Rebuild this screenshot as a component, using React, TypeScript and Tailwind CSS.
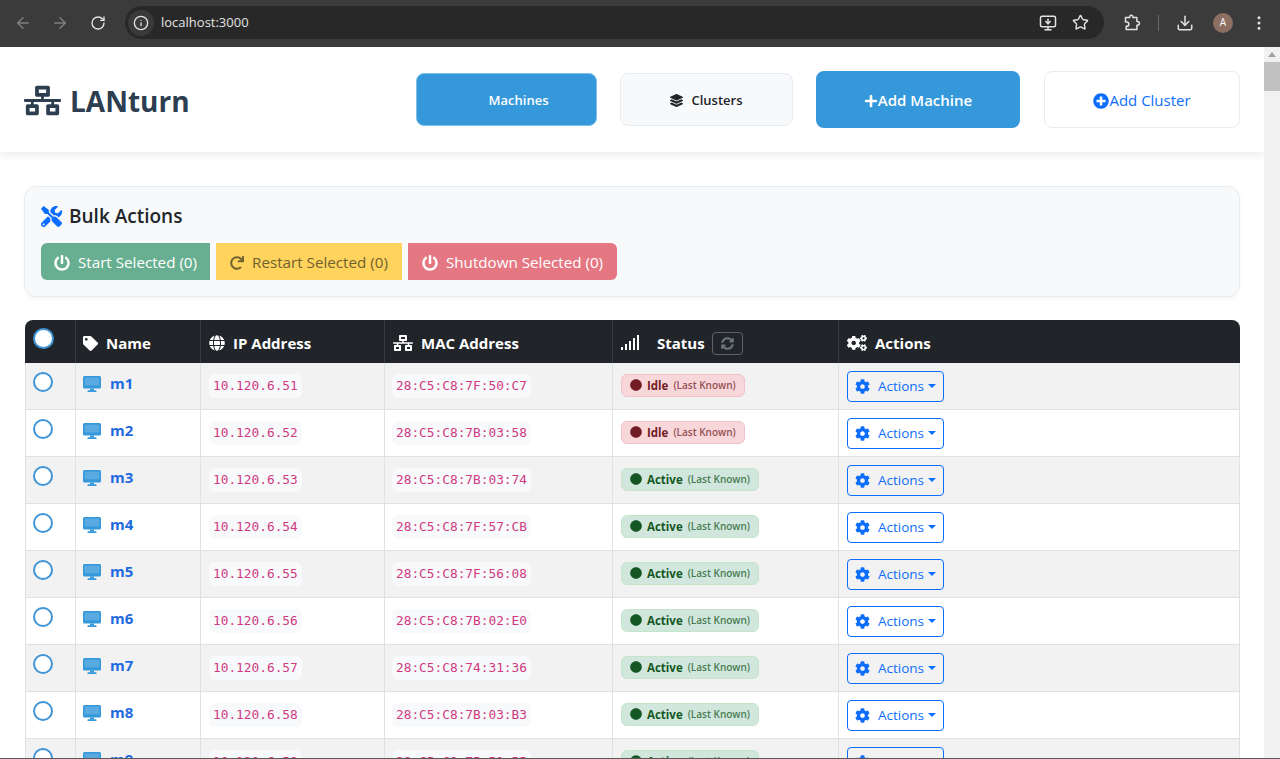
import { ArrowLeft, ArrowRight, RotateCw, Info, Star, Download, MoreVertical, MonitorDown } from "lucide-react";
import { FaNetworkWired, FaLayerGroup, FaPlus, FaPlusCircle, FaTools, FaPowerOff, FaRedo, FaTag, FaGlobe, FaSyncAlt, FaCogs, FaCog, FaCircle } from "react-icons/fa";

type Machine = { name: string; ip: string; mac: string; status: "Idle" | "Active" };

const machines: Machine[] = [
  { name: "m1", ip: "10.120.6.51", mac: "28:C5:C8:7F:50:C7", status: "Idle" },
  { name: "m2", ip: "10.120.6.52", mac: "28:C5:C8:7B:03:58", status: "Idle" },
  { name: "m3", ip: "10.120.6.53", mac: "28:C5:C8:7B:03:74", status: "Active" },
  { name: "m4", ip: "10.120.6.54", mac: "28:C5:C8:7F:57:CB", status: "Active" },
  { name: "m5", ip: "10.120.6.55", mac: "28:C5:C8:7F:56:08", status: "Active" },
  { name: "m6", ip: "10.120.6.56", mac: "28:C5:C8:7B:02:E0", status: "Active" },
  { name: "m7", ip: "10.120.6.57", mac: "28:C5:C8:74:31:36", status: "Active" },
  { name: "m8", ip: "10.120.6.58", mac: "28:C5:C8:7B:03:B3", status: "Active" },
  { name: "m9", ip: "10.120.6.59", mac: "28:C5:C8:75:51:55", status: "Active" },
];

function ExtensionIcon() {
  return (
    <svg width="18" height="18" viewBox="0 0 18 18" fill="none" stroke="currentColor" strokeWidth="1.5" strokeLinejoin="round">
      <path d="M2.5 3.5h4.2v-.6a1.6 1.6 0 0 1 3.2 0v.6h4v3.9h.6a1.9 1.9 0 0 1 0 3.8h-.6v4.3H3.2v-3.2h.5a2.1 2.1 0 0 0 0-4.2h-1.2z" />
    </svg>
  );
}

function ScreenIcon() {
  return (
    <svg width="18" height="16" viewBox="0 0 18 16" className="text-[#3498db]" fill="currentColor">
      <path d="M1.5 0h15A1.5 1.5 0 0 1 18 1.5v9.5a1.5 1.5 0 0 1-1.5 1.5h-15A1.5 1.5 0 0 1 0 11V1.5A1.5 1.5 0 0 1 1.5 0z" />
      <rect x="7" y="12.5" width="4" height="2" />
      <rect x="4.5" y="14.3" width="9" height="1.7" rx="0.6" />
      <rect x="1.6" y="1.6" width="14.8" height="7.8" fill="#ffffff" fillOpacity="0.18" />
    </svg>
  );
}

function ChromeBar() {
  return (
    <div className="h-[47px] shrink-0 flex items-center pb-[2px] bg-[#3b3b3b] text-[#e3e3e3]">
      <div className="w-[125px] shrink-0 flex items-center pl-[14px] gap-[19px]">
        <ArrowLeft size={18} className="text-[#7f7f7f]" />
        <ArrowRight size={18} className="text-[#7f7f7f]" />
        <RotateCw size={16} className="ml-[2px]" />
      </div>
      <div className="w-[979px] h-[33px] rounded-full bg-[#282828] flex items-center">
        <span className="ml-[3px] w-[26px] h-[26px] rounded-full bg-[#3a3a3a] flex items-center justify-center">
          <Info size={16} />
        </span>
        <span className="ml-[7px] text-[13px]">localhost:3000</span>
        <MonitorDown size={18} className="ml-auto" />
        <Star size={17} className="ml-[15px] mr-[15px]" />
      </div>
      <span className="ml-[19px]"><ExtensionIcon /></span>
      <span className="ml-[17px] w-px h-[16px] bg-[#6a6a6a]" />
      <Download size={18} className="ml-[17px]" />
      <span className="ml-[19px] w-5 h-5 rounded-full bg-[#8d6e63] text-white text-[10px] flex items-center justify-center">A</span>
      <MoreVertical size={18} className="ml-[17px]" />
    </div>
  );
}

function Header() {
  return (
    <header className="relative h-[105px] shrink-0 bg-white shadow-[0_2px_10px_rgba(0,0,0,0.1)] flex items-center justify-between px-6">
      <div className="flex items-center gap-[9px] pt-[2px] text-[#2c3e50]">
        <FaNetworkWired size={37} />
        <h1 className="text-[28px] font-bold">LANturn</h1>
      </div>
      <div className="flex items-center">
        <button className="w-[181px] h-[53px] pl-[24px] pt-[2px] rounded-lg bg-[#3498db] text-white text-[13px] font-semibold border border-[#7cc0ec]">Machines</button>
        <button className="ml-[23px] w-[173px] h-[53px] pt-[2px] rounded-lg bg-[#f8f9fa] text-[#212529] text-[13px] font-semibold border border-[#e9ecef] flex items-center justify-center gap-[8px]">
          <FaLayerGroup size={13} />Clusters
        </button>
        <button className="ml-[23px] w-[204px] h-[57px] pt-[2px] rounded-lg bg-[#3498db] text-white text-[15px] font-semibold flex items-center justify-center">
          <FaPlus size={14} />Add Machine
        </button>
        <button className="ml-[24px] w-[196px] h-[57px] pt-[2px] rounded-lg bg-white text-[#0d6efd] text-[15px] border border-[#e9ecef] flex items-center justify-center">
          <FaPlusCircle size={16} />Add Cluster
        </button>
      </div>
    </header>
  );
}

function BulkActions() {
  return (
    <section className="h-[111px] rounded-xl bg-[#f8f9fa] border border-[#e9ecef] shadow-[0_2px_4px_rgba(0,0,0,0.04)] pt-[15px] px-4">
      <h2 className="flex items-center gap-[7px] h-[28px] text-[19px] font-semibold text-[#212529]">
        <FaTools size={21} className="text-[#0d6efd]" />Bulk Actions
      </h2>
      <div className="flex gap-[6px] mt-[13px]">
        <button className="w-[169px] h-[37px] pt-[2px] rounded-l-md bg-[#67af90] text-white text-[15.2px] flex items-center justify-center gap-2">
          <FaPowerOff size={16} />Start Selected (0)
        </button>
        <button className="w-[186px] h-[37px] pt-[2px] bg-[#ffd35c] text-[#6f6132] text-[15.2px] flex items-center justify-center gap-2">
          <FaRedo size={14} />Restart Selected (0)
        </button>
        <button className="w-[209px] h-[37px] pt-[2px] rounded-r-md bg-[#e47782] text-white text-[15.2px] flex items-center justify-center gap-2">
          <FaPowerOff size={16} />Shutdown Selected (0)
        </button>
      </div>
    </section>
  );
}

function SignalBars() {
  return (
    <svg width="20" height="16" viewBox="0 0 20 16" fill="currentColor">
      <rect x="0" y="12" width="2" height="3" />
      <rect x="4" y="9" width="2" height="6" />
      <rect x="8" y="6" width="2" height="9" />
      <rect x="12" y="3" width="2" height="12" />
      <rect x="16" y="0" width="2" height="15" />
    </svg>
  );
}

function StatusBadge({ status }: { status: Machine["status"] }) {
  const idle = status === "Idle";
  return (
    <span className={`inline-flex items-center h-[23px] mb-[2px] rounded-md px-[8px] border text-[11.5px] font-bold ${idle ? "bg-[#f8d7da] border-[#f1c2c7] text-[#721c24]" : "bg-[#d1e7dd] border-[#c3e6cb] text-[#155724]"}`}>
      <FaCircle size={12} className="mr-[5px]" />
      {status}
      <span className="ml-[5px] text-[10px] font-semibold opacity-75">(Last Known)</span>
    </span>
  );
}

function Row({ m, i }: { m: Machine; i: number }) {
  const cell = "h-[47px] border-b border-r border-[#dee2e6] px-2 align-middle";
  return (
    <tr className={i % 2 === 0 ? "bg-[#f2f2f2]" : "bg-white"}>
      <td className={`${cell} border-l`}>
        <span className="block w-[20px] h-[20px] -mt-[9px] -ml-px rounded-full bg-white border-2 border-[#3f94d6]" />
      </td>
      <td className={cell}>
        <div className="flex items-center gap-[9px] -mt-[5px] -ml-px">
          <ScreenIcon />
          <span className="text-[15px] font-bold text-[#1f6ae0]">{m.name}</span>
        </div>
      </td>
      <td className={cell}>
        <code className="inline-block mb-[2px] rounded-md bg-[#f8f9fa] px-[4px] py-[3px] font-['DejaVu_Sans_Mono',monospace] text-[12.8px] leading-[18px] text-[#cf3a82]">{m.ip}</code>
      </td>
      <td className={cell}>
        <code className="inline-block mb-[2px] -ml-px rounded-md bg-[#f8f9fa] px-[4px] py-[3px] font-['DejaVu_Sans_Mono',monospace] text-[12.8px] leading-[18px] text-[#cf3a82]">{m.mac}</code>
      </td>
      <td className={cell}>
        <StatusBadge status={m.status} />
      </td>
      <td className={cell}>
        <button className="w-[97px] h-[31px] rounded-[4px] border border-[#0d6efd] text-[#0d6efd] text-[13.5px] flex items-center justify-center">
          <FaCog size={15} className="mr-[8px]" />Actions
          <span className="ml-[4px] border-x-[4px] border-x-transparent border-t-[4px] border-t-[#0d6efd]" />
        </button>
      </td>
    </tr>
  );
}

function MachineTable() {
  const head = "h-[43px] border-r border-[#373b3e] px-2 pt-[3px] text-left text-[15px] font-bold text-white";
  return (
    <table className="w-[1215px] ml-px mt-[23px] table-fixed border-separate border-spacing-0">
      <colgroup>
        <col className="w-[51px]" />
        <col className="w-[125px]" />
        <col className="w-[184px]" />
        <col className="w-[228px]" />
        <col className="w-[226px]" />
        <col />
      </colgroup>
      <thead>
        <tr className="bg-[#212529]">
          <th className={`${head} rounded-tl-lg`}>
            <span className="block w-[21px] h-[21px] -mt-[9px] rounded-full bg-white border-2 border-[#3f94d6]" />
          </th>
          <th className={head}>
            <div className="flex items-center gap-[8px] -ml-px"><FaTag size={15} />Name</div>
          </th>
          <th className={head}>
            <div className="flex items-center gap-[8px]"><FaGlobe size={16} />IP Address</div>
          </th>
          <th className={head}>
            <div className="flex items-center gap-[8px]"><FaNetworkWired size={20} />MAC Address</div>
          </th>
          <th className={head}>
            <div className="flex items-center">
              <SignalBars />
              <span className="ml-[16px]">Status</span>
              <span className="ml-[7px] w-[31px] h-[23px] rounded border border-[#5c636a] flex items-center justify-center text-[#6c757d]">
                <FaSyncAlt size={13} />
              </span>
            </div>
          </th>
          <th className={`${head} rounded-tr-lg border-r-0`}>
            <div className="flex items-center gap-[8px]"><FaCogs size={20} />Actions</div>
          </th>
        </tr>
      </thead>
      <tbody>
        {machines.map((m, i) => <Row key={m.name} m={m} i={i} />)}
      </tbody>
    </table>
  );
}

export default function App() {
  return (
    <div className="h-screen overflow-hidden flex flex-col font-['Open_Sans',sans-serif] bg-white">
      <ChromeBar />
      <div className="flex-1 min-h-0 flex">
        <div className="flex-1 min-w-0 flex flex-col overflow-hidden">
          <Header />
          <main className="px-6 pt-[34px]">
            <BulkActions />
            <MachineTable />
          </main>
        </div>
        <div className="w-4 shrink-0 bg-[#f1f1f1] flex flex-col items-center pt-[5px]">
          <span className="border-x-[4px] border-x-transparent border-b-[5px] border-b-[#a3a3a3]" />
          <span className="mt-[5px] w-full h-[29px] bg-[#c1c1c1]" />
        </div>
      </div>
      <div className="h-px shrink-0 bg-[#5a5a5a]" />
    </div>
  );
}
